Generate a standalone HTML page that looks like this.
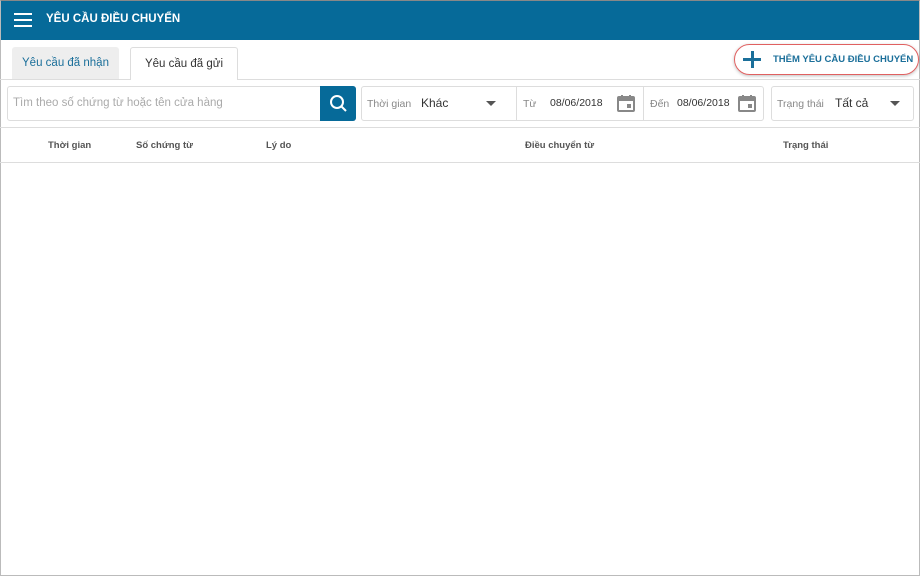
<!DOCTYPE html>
<html><head><meta charset="utf-8"><style>
*{box-sizing:border-box;margin:0;padding:0}
body{width:920px;height:576px;position:relative;background:#fff;font-family:"Liberation Sans",sans-serif;overflow:hidden}
.a{position:absolute;white-space:nowrap}
.hdr{left:0;top:0;width:920px;height:40px;background:#066a99;color:#fff;font-weight:bold;font-size:11.5px}
.box{border:1px solid #ddd;border-radius:3px;background:#fff}
.g{color:#888;font-size:10.5px}
.v{color:#333;font-size:10.5px}
.th{font-size:9.5px;font-weight:bold;color:#555;top:140px}
</style></head><body>
<div class="a hdr">
 <div class="a" style="left:14px;top:13px;width:18px;height:2px;background:#fff"></div>
 <div class="a" style="left:14px;top:19px;width:18px;height:2px;background:#fff"></div>
 <div class="a" style="left:14px;top:25px;width:18px;height:2px;background:#fff"></div>
 <div class="a" style="left:46px;top:13px">YÊU CẦU ĐIỀU CHUYỂN</div>
</div>
<div class="a" style="left:0;top:0;width:920px;height:576px;border:1px solid #bbb;border-top-color:#888"></div>
<div class="a" style="left:12px;top:47px;width:107px;height:33px;background:#eee;border-radius:3px 3px 0 0;color:#1b6f9a;font-size:11.5px;text-align:center;line-height:33px">Yêu cầu đã nhận</div>
<div class="a" style="left:130px;top:47px;width:108px;height:33px;background:#fff;border:1px solid #ddd;border-bottom:none;border-radius:3px 3px 0 0;color:#333;font-size:11.5px;text-align:center;line-height:32px">Yêu cầu đã gửi</div>
<div class="a" style="left:0;top:79px;width:130px;height:1px;background:#ddd"></div>
<div class="a" style="left:237px;top:79px;width:683px;height:1px;background:#ddd"></div>
<div class="a" style="left:734px;top:44px;width:185px;height:31px;border:1.5px solid #e06060;border-radius:16px;box-shadow:0 1px 3px rgba(0,0,0,.25)"></div>
<div class="a" style="left:743px;top:58px;width:18px;height:3px;background:#1b6f9a"></div>
<div class="a" style="left:750.5px;top:51px;width:3px;height:17px;background:#1b6f9a"></div>
<div class="a" style="left:773px;top:54px;font-size:9.5px;font-weight:bold;color:#1b6f9a">THÊM YÊU CẦU ĐIỀU CHUYỂN</div>
<div class="a box" style="left:7px;top:86px;width:349px;height:35px"></div>
<div class="a" style="left:13px;top:97px;font-size:11.5px;color:#aaa">Tìm theo số chứng từ hoặc tên cửa hàng</div>
<div class="a" style="left:320px;top:86px;width:36px;height:35px;background:#066a99;border-radius:0 3px 3px 0">
 <svg width="36" height="35"><circle cx="17" cy="16" r="6" fill="none" stroke="#fff" stroke-width="2"/><line x1="21.5" y1="20.5" x2="26" y2="25" stroke="#fff" stroke-width="2"/></svg></div>
<div class="a box" style="left:361px;top:86px;width:403px;height:35px"></div>
<div class="a" style="left:516px;top:86px;width:1px;height:35px;background:#ddd"></div>
<div class="a" style="left:643px;top:86px;width:1px;height:35px;background:#ddd"></div>
<div class="a g" style="left:367px;top:98px">Thời gian</div>
<div class="a" style="left:421px;top:96px;font-size:12px;color:#333">Khác</div>
<div class="a" style="left:486px;top:101px;border:5px solid transparent;border-top:5px solid #555"></div>
<div class="a g" style="left:523px;top:98px">Từ</div>
<div class="a v" style="left:550px;top:97px">08/06/2018</div>
<div class="a g" style="left:650px;top:98px">Đến</div>
<div class="a v" style="left:677px;top:97px">08/06/2018</div>
<svg class="a" style="left:617px;top:94px" width="18" height="18"><rect x="1" y="3" width="16" height="14" rx="1" fill="none" stroke="#888" stroke-width="2"/><rect x="1" y="3" width="16" height="4" fill="#888"/><line x1="5" y1="1" x2="5" y2="4" stroke="#888" stroke-width="2"/><line x1="13" y1="1" x2="13" y2="4" stroke="#888" stroke-width="2"/><rect x="10" y="10" width="4" height="4" fill="#888"/></svg>
<svg class="a" style="left:738px;top:94px" width="18" height="18"><rect x="1" y="3" width="16" height="14" rx="1" fill="none" stroke="#888" stroke-width="2"/><rect x="1" y="3" width="16" height="4" fill="#888"/><line x1="5" y1="1" x2="5" y2="4" stroke="#888" stroke-width="2"/><line x1="13" y1="1" x2="13" y2="4" stroke="#888" stroke-width="2"/><rect x="10" y="10" width="4" height="4" fill="#888"/></svg>
<div class="a box" style="left:771px;top:86px;width:143px;height:35px"></div>
<div class="a g" style="left:777px;top:98px">Trạng thái</div>
<div class="a" style="left:835px;top:96px;font-size:12px;color:#333">Tất cả</div>
<div class="a" style="left:890px;top:101px;border:5px solid transparent;border-top:5px solid #555"></div>
<div class="a" style="left:0;top:127px;width:920px;height:1px;background:#ddd"></div>
<div class="a th" style="left:48px">Thời gian</div>
<div class="a th" style="left:136px">Số chứng từ</div>
<div class="a th" style="left:266px">Lý do</div>
<div class="a th" style="left:525px">Điều chuyển từ</div>
<div class="a th" style="left:783px">Trạng thái</div>
<div class="a" style="left:0;top:162px;width:920px;height:1px;background:#ddd"></div>
</body></html>
